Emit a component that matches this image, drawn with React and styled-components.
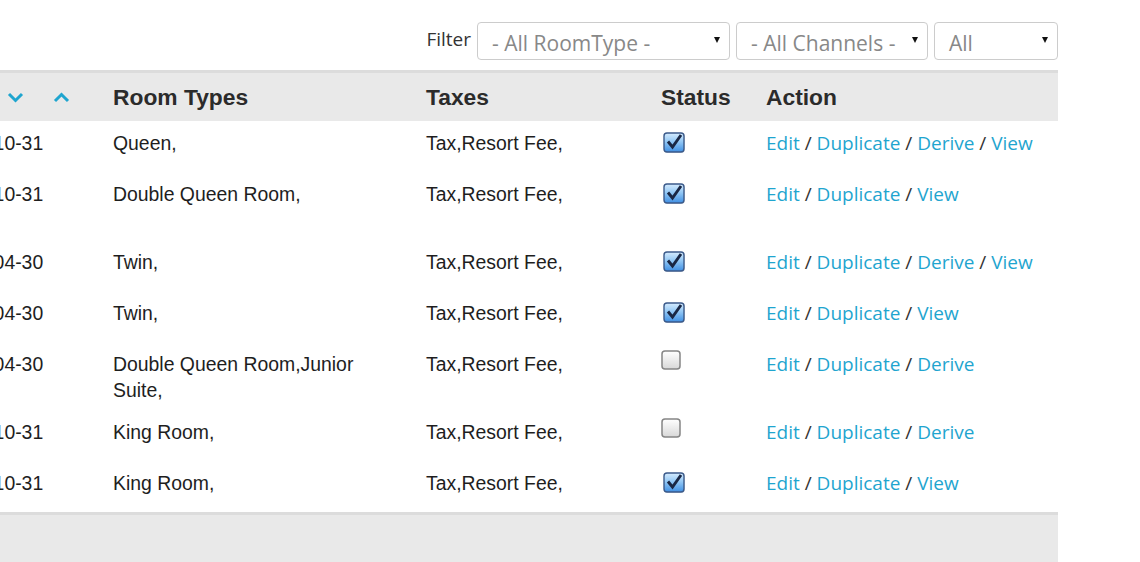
import React from "react";
import styled, { createGlobalStyle } from "styled-components";

const GlobalStyle = createGlobalStyle`
  html, body {
    margin: 0;
    padding: 0;
    background: #fff;
    overflow: hidden;
  }
`;

const Panel = styled.div`
  width: 1128px;
  margin-left: -70px;
  display: flex;
  flex-direction: column;
`;

const FilterBar = styled.div`
  display: flex;
  justify-content: flex-end;
  align-items: center;
  gap: 6px;
  padding-top: 22px;
  margin-bottom: 10px;
`;

const FilterLabel = styled.span`
  font-family: "Open Sans", sans-serif;
  font-size: 19px;
  color: #333;
  margin-top: -4px;
`;

const Select = styled.div`
  box-sizing: border-box;
  width: ${(p) => p.$width}px;
  height: 38px;
  border: 1px solid #ccc;
  border-radius: 4px;
  padding: 4px 9px 0 14px;
  display: flex;
  align-items: center;
  justify-content: space-between;
  font-family: "Open Sans", sans-serif;
  font-size: 21px;
  color: #888;
  background: #fff;
`;

const Caret = styled.span`
  width: 0;
  height: 0;
  margin-top: -6px;
  border-left: 3px solid transparent;
  border-right: 3px solid transparent;
  border-top: 6px solid #111;
`;

const Columns = "183px 313px 235px 105px 1fr";

const HeadRow = styled.div`
  display: grid;
  grid-template-columns: ${Columns};
  height: 51px;
  box-sizing: border-box;
  border-top: 3px solid #dcdcdc;
  background: #e9e9e9;
  align-items: center;
`;

const HeadCell = styled.div`
  font-family: "Liberation Sans", Arial, sans-serif;
  font-weight: bold;
  font-size: 22.8px;
  color: #2b2b2b;
`;

const SortCell = styled.div`
  display: flex;
  align-items: center;
  gap: 29px;
  padding-left: 77px;
`;

const Row = styled.div`
  display: grid;
  grid-template-columns: ${Columns};
  min-height: ${(p) => (p.$tall ? 68 : 51)}px;
  box-sizing: border-box;
  padding-top: 9px;
`;

const Cell = styled.div`
  font-family: "Liberation Sans", Arial, sans-serif;
  font-size: 19.4px;
  line-height: 26px;
  color: #1e1e1e;
  padding-left: ${(p) => p.$indent || 0}px;
  padding-right: 40px;
`;

const ActionCell = styled.div`
  font-family: "Open Sans", sans-serif;
  font-size: 19px;
  line-height: 26px;
  color: #333;
`;

const Link = styled.a`
  color: #1fa5cf;
  text-decoration: none;
  cursor: pointer;
`;

const Box = styled.svg`
  display: block;
  margin-top: ${(p) => (p.$checked ? 2 : -1)}px;
  margin-left: ${(p) => (p.$checked ? 2 : 0)}px;
`;

const Footer = styled.div`
  height: 60px;
  border-top: 3px solid #dcdcdc;
  background: #e9e9e9;
`;

const Chevron = ({ up }) => (
  <svg width="17" height="11" viewBox="0 0 17 11">
    <polyline
      points={up ? "2,9 8.5,2.5 15,9" : "2,2 8.5,8.5 15,2"}
      fill="none"
      stroke="#1fa5cf"
      strokeWidth="3"
    />
  </svg>
);

const Checkbox = ({ checked }) =>
  checked ? (
    <Box $checked width="23" height="22" viewBox="0 0 23 22">
      <defs>
        <linearGradient id="cbOn" x1="0" y1="0" x2="0" y2="1">
          <stop offset="0" stopColor="#d6ebfd" />
          <stop offset="0.45" stopColor="#93c8f5" />
          <stop offset="1" stopColor="#3f8fe3" />
        </linearGradient>
      </defs>
      <rect x="1.8" y="1.8" width="20" height="19" rx="3" fill="#9a9a9a" opacity="0.35" />
      <rect x="1" y="1" width="20" height="19" rx="3" fill="url(#cbOn)" stroke="#3b5a8a" strokeWidth="1.4" />
      <polyline points="5,9.5 9.5,15 18,3" fill="none" stroke="#1a2744" strokeWidth="2.9" />
    </Box>
  ) : (
    <Box width="21" height="21" viewBox="0 0 21 21">
      <defs>
        <linearGradient id="cbOff" x1="0" y1="0" x2="0" y2="1">
          <stop offset="0" stopColor="#ffffff" />
          <stop offset="1" stopColor="#d8d8d8" />
        </linearGradient>
      </defs>
      <rect x="1" y="1" width="18" height="18" rx="3" fill="url(#cbOff)" stroke="#858585" strokeWidth="1.5" />
    </Box>
  );

const rows = [
  { date: "2016-10-31", rooms: "Queen,", on: true, actions: ["Edit", "Duplicate", "Derive", "View"] },
  { date: "2016-10-31", rooms: "Double Queen Room,", on: true, actions: ["Edit", "Duplicate", "View"], tall: true },
  { date: "2017-04-30", rooms: "Twin,", on: true, actions: ["Edit", "Duplicate", "Derive", "View"] },
  { date: "2017-04-30", rooms: "Twin,", on: true, actions: ["Edit", "Duplicate", "View"] },
  { date: "2017-04-30", rooms: "Double Queen Room,Junior Suite,", on: false, actions: ["Edit", "Duplicate", "Derive"], tall: true },
  { date: "2016-10-31", rooms: "King Room,", on: false, actions: ["Edit", "Duplicate", "Derive"] },
  { date: "2016-10-31", rooms: "King Room,", on: true, actions: ["Edit", "Duplicate", "View"] },
];

const App = () => {
  return (
    <>
      <GlobalStyle />
      <Panel>
        <FilterBar>
          <FilterLabel>Filter</FilterLabel>
          <Select $width={253}>
            - All RoomType -<Caret />
          </Select>
          <Select $width={192}>
            - All Channels -<Caret />
          </Select>
          <Select $width={124}>
            All<Caret />
          </Select>
        </FilterBar>

        <HeadRow>
          <SortCell>
            <Chevron />
            <Chevron up />
          </SortCell>
          <HeadCell>Room Types</HeadCell>
          <HeadCell>Taxes</HeadCell>
          <HeadCell>Status</HeadCell>
          <HeadCell>Action</HeadCell>
        </HeadRow>

        {rows.map((r, i) => (
          <Row key={i} $tall={r.tall}>
            <Cell $indent={14}>{r.date}</Cell>
            <Cell>{r.rooms}</Cell>
            <Cell>Tax,Resort Fee,</Cell>
            <div>
              <Checkbox checked={r.on} />
            </div>
            <ActionCell>
              {r.actions.map((a, j) => (
                <React.Fragment key={a}>
                  {j > 0 && " / "}
                  <Link>{a}</Link>
                </React.Fragment>
              ))}
            </ActionCell>
          </Row>
        ))}

        <Footer />
      </Panel>
    </>
  );
};

export default App;
